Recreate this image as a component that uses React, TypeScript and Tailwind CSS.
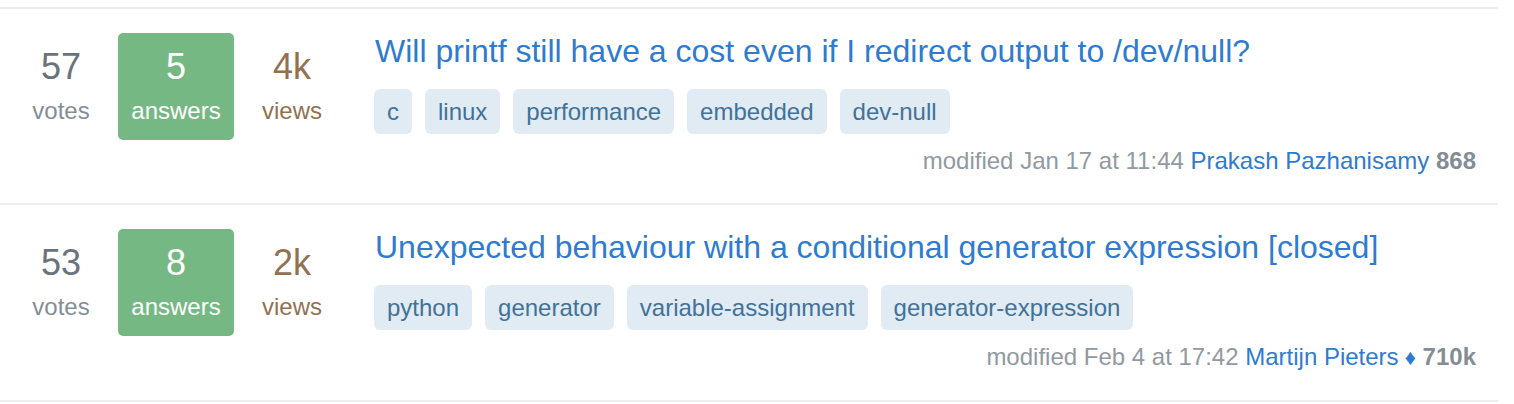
import React from 'react';

type Question = {
  id: number;
  votes: number;
  answers: number;
  views: string;
  title: string;
  tags: string[];
  modified: string;
  user: string;
  moderator?: boolean;
  rep: string;
};

const questions: Question[] = [
  {
    id: 1,
    votes: 57,
    answers: 5,
    views: '4k',
    title: 'Will printf still have a cost even if I redirect output to /dev/null?',
    tags: ['c', 'linux', 'performance', 'embedded', 'dev-null'],
    modified: 'modified Jan 17 at 11:44',
    user: 'Prakash Pazhanisamy',
    rep: '868',
  },
  {
    id: 2,
    votes: 53,
    answers: 8,
    views: '2k',
    title: 'Unexpected behaviour with a conditional generator expression [closed]',
    tags: ['python', 'generator', 'variable-assignment', 'generator-expression'],
    modified: 'modified Feb 4 at 17:42',
    user: 'Martijn Pieters',
    moderator: true,
    rep: '710k',
  },
];

const Stat = ({ value, label, className }: { value: React.ReactNode; label: string; className: string }) => (
  <div className={`flex h-[107px] shrink-0 flex-col items-center pt-[14px] ${className}`}>
    <div className="text-[36px] leading-[40px]">{value}</div>
    <div className="mt-[10px] text-[24px] leading-[28px]">{label}</div>
  </div>
);

const QuestionRow = ({ q }: { q: Question }) => (
  <div className="flex items-start border-t-2 border-[#eceeef] pt-[24px] pb-[28px] pr-[22px]">
    <div className="flex shrink-0 items-start pl-[16px]">
      <Stat value={q.votes} label="votes" className="w-[90px] text-[#6a737c] [&>div:last-child]:text-[#848d95]" />
      <Stat value={q.answers} label="answers" className="ml-[12px] w-[116px] rounded-[5px] bg-[#76b883] text-white" />
      <Stat value={q.views} label="views" className="w-[116px] text-[#91714f]" />
    </div>
    <div className="ml-[24px] flex min-w-0 flex-1 flex-col">
      <a href="#" className="pl-[1px] text-[32px] leading-[36px] text-[#2e7bcf]">
        {q.title}
      </a>
      <div className="mt-[20px] flex gap-[13px]">
        {q.tags.map((tag) => (
          <span
            key={tag}
            className="flex h-[45px] items-center rounded-[6px] bg-[#e1ebf3] px-[13px] text-[24px] text-[#41729a]"
          >
            {tag}
          </span>
        ))}
      </div>
      <div className="mt-[13px] text-right text-[24px] leading-[28px] text-[#9199a1]">
        {q.modified}{' '}
        <a href="#" className="text-[#2e7bcf]">
          {q.user}
        </a>
        {q.moderator && <span className="text-[22px] text-[#2e7bcf]"> ♦</span>}{' '}
        <span className="font-bold text-[#848d95]">{q.rep}</span>
      </div>
    </div>
  </div>
);

const App = () => {
  return (
    <div className="min-h-screen bg-white pt-[7px] font-['Liberation_Sans',Arial,sans-serif]">
      <div className="w-[1498px] border-b-2 border-[#eceeef]">
        {questions.map((q) => (
          <QuestionRow key={q.id} q={q} />
        ))}
      </div>
    </div>
  );
};

export default App;
